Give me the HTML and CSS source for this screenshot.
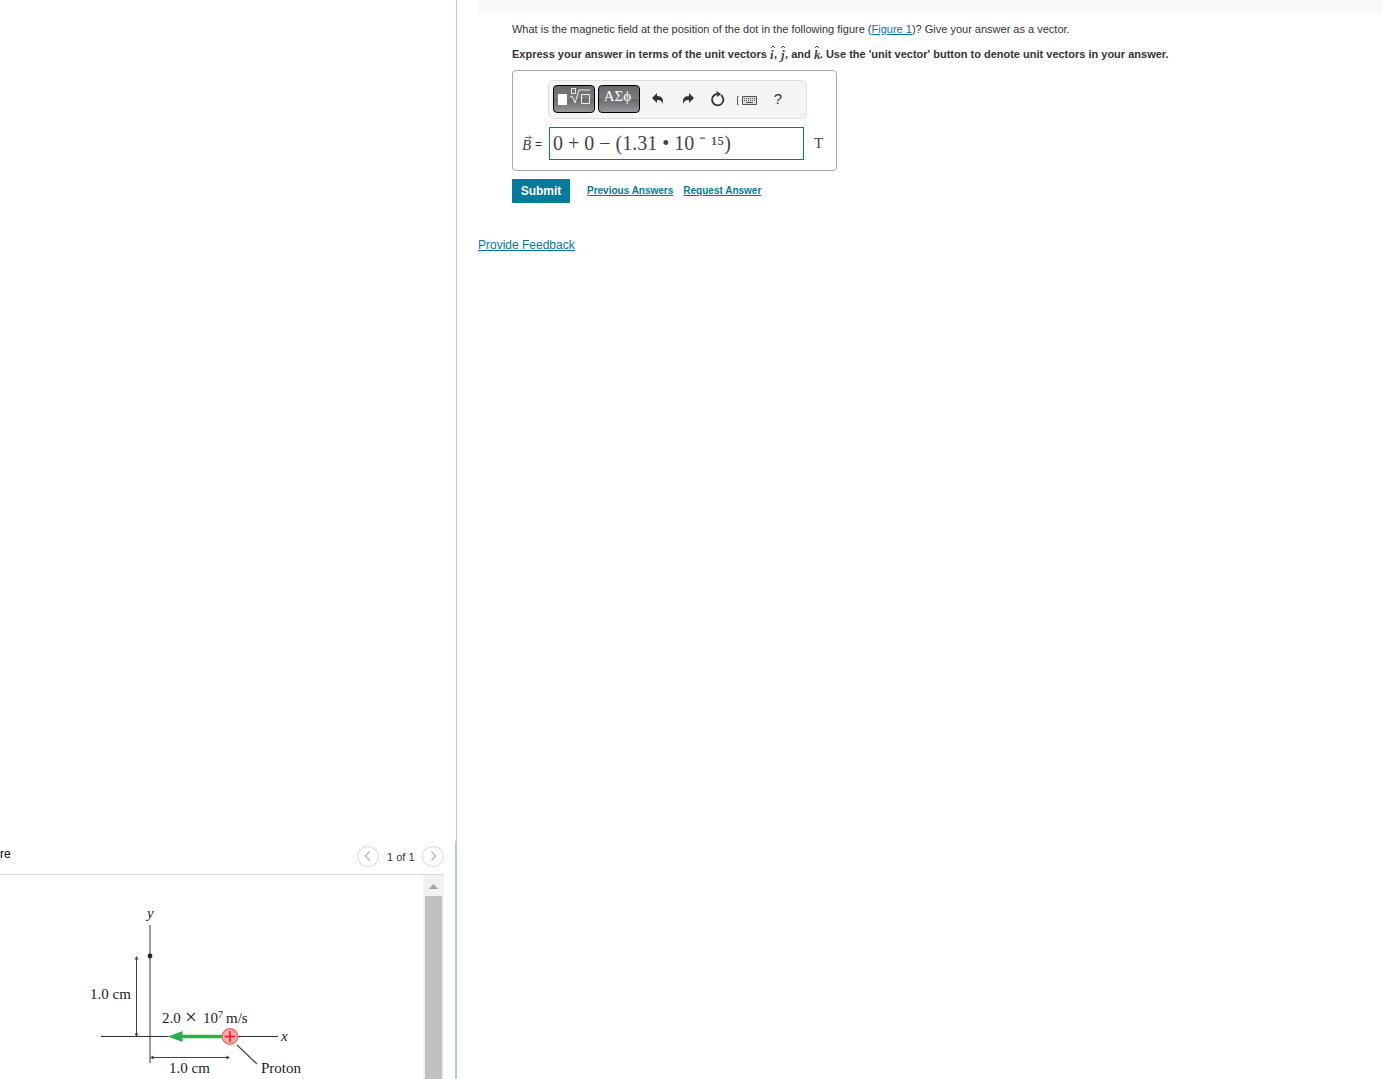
FILE: index.html
```html
<!DOCTYPE html>
<html lang="en">
<head>
<meta charset="utf-8">
<meta name="viewport" content="width=device-width, initial-scale=1">
<title>Magnetic field of a moving proton</title>
<link rel="stylesheet" href="styles.css">
</head>
<body>
<div class="layout">
  <aside class="side">
    <section class="figure-panel">
      <header class="figure-header">
        <h2 class="figure-title">re</h2>
        <nav class="pager" aria-label="Figures">
          <button class="pager-button" type="button" aria-label="Previous figure">
            <svg width="20" height="20" viewBox="0 0 20 20"><path d="M11.500 4.500 7.500 9l4 4.500" fill="none" stroke="#bbb" stroke-width="1.500"/></svg>
          </button>
          <span class="pager-text">1 of 1</span>
          <button class="pager-button" type="button" aria-label="Next figure">
            <svg width="20" height="20" viewBox="0 0 20 20"><path d="m8.500 4.500 4 4.500-4 4.500" fill="none" stroke="#bbb" stroke-width="1.500"/></svg>
          </button>
        </nav>
      </header>
      <div class="figure-body" id="figure">
        <svg class="diagram" width="330" height="204" viewBox="0 875 330 204" role="img" aria-label="Proton moving left along the x axis">
          <path d="M150 925v138" stroke="#777" stroke-width="1.500"/>
          <path d="M101 1036.500h177" stroke="#333" stroke-width="1.200"/>
          <path d="M136.500 958v77M151 1057.500h77" stroke="#444" stroke-width="1"/>
          <path d="m136.500 956-2 3.500h4zM136.500 1037l-2-3.500h4zM150 1057.500l3.500-2v4zM230 1057.500l-3.500-2v4z" fill="#444"/>
          <circle cx="150" cy="956" r="2.400" fill="#222"/>
          <path d="M180 1036.500h44" stroke="#25b34b" stroke-width="3.600"/>
          <path d="m168 1036.500 14.500-5.500v11z" fill="#25b34b"/>
          <circle cx="230" cy="1036.500" r="7.800" fill="#f9ab9c" stroke="#ef6a6c" stroke-width="1.200"/>
          <path d="M224.500 1036.500h11M230 1031v11" stroke="#e5173f" stroke-width="1.500"/>
          <path d="m237 1045 20 19" stroke="#444" stroke-width="1.200"/>
          <text x="147" y="918" class="axis">y</text>
          <text x="281" y="1041" class="axis">x</text>
          <text x="90" y="999">1.0 cm</text>
          <text x="162" y="1023">2.0 <tspan class="times" x="185" dy="1">×</tspan><tspan x="203" dy="-1">10</tspan><tspan class="exponent" dy="-5">7</tspan><tspan x="226" dy="5">m/s</tspan></text>
          <text x="169" y="1073">1.0 cm</text>
          <text x="261" y="1073">Proton</text>
        </svg>
        <div class="scrollbar" aria-hidden="true">
          <svg class="scroll-arrow" width="21" height="21" viewBox="0 0 21 21"><path d="M6 14l4.500-5 4.500 5z" fill="#a0a0a0"/></svg>
          <div class="scroll-thumb"></div>
        </div>
      </div>
    </section>
  </aside>
  <main class="main">
    <div class="part-bar"></div>
    <section class="question">
      <p class="prompt">What is the magnetic field at the position of the dot in the following figure (<a href="#figure">Figure 1</a>)? Give your answer as a vector.</p>
      <p class="instructions">Express your answer in terms of the unit vectors
        <svg class="unit" width="4" height="16" viewBox="0 0 4 16"><text x="0" y="13">i</text><path d="m1 2 2-2 2 2"/></svg>,
        <svg class="unit" width="5" height="16" viewBox="0 0 5 16"><text x="1" y="13">j</text><path d="m1 2 2-2 2 2"/></svg>, and
        <svg class="unit" width="6" height="16" viewBox="0 0 6 16"><text x="0" y="13">k</text><path d="m1 2 2-2 2 2"/></svg>. Use the 'unit vector' button to denote unit vectors in your answer.</p>
      <form class="answer">
        <div class="answer-box">
          <div class="toolbar">
            <button class="palette" type="button" aria-label="Templates">
              <svg width="40" height="26" viewBox="0 0 40 26"><path d="M4 8h9v11H4z" fill="#fff"/><path d="M17.500 2.500h4v5h-4zM16 11l2-1 3 7 4-13h11M27.500 8.500h8v9h-8z" fill="none" stroke="#eee"/></svg>
            </button>
            <button class="palette" type="button">ΑΣϕ</button>
            <button class="tool" type="button" aria-label="Undo"><svg width="14" height="14" viewBox="0 0 14 14"><path d="M6 1v3c5 0 7 3 5.500 8C11 9 9.500 8 6 8v3L1 6z" fill="#333"/></svg></button>
            <button class="tool" type="button" aria-label="Redo"><svg width="14" height="14" viewBox="0 0 14 14"><path d="M8 1v3C3 4 1 7 2.500 12 3 9 4.500 8 8 8v3l5-5z" fill="#333"/></svg></button>
            <button class="tool" type="button" aria-label="Reset"><svg width="16" height="16" viewBox="0 0 16 16"><path d="M11 4A5.700 5.700 0 1 1 7 3" fill="none" stroke="#333" stroke-width="1.800"/><path d="M6.500 0 11 3 7.500 6z" fill="#333"/></svg></button>
            <button class="tool" type="button" aria-label="Keyboard shortcuts"><svg width="24" height="14" viewBox="0 0 24 14"><path d="M2.500 4.500h-1v8h1" fill="none" stroke="#555"/><path d="M6.500 4.500h14v8h-14z" fill="#ddd" stroke="#555"/><path d="M8 6.500h12M8 8.500h12" stroke="#555" stroke-dasharray="1 1"/><path d="M10 10.500h7" stroke="#555"/></svg></button>
            <button class="tool help" type="button">?</button>
          </div>
          <label class="symbol" for="field">
            <svg width="11" height="18" viewBox="0 0 11 18" role="img"><text x="0" y="15">B</text><path d="M3 2.500h6M7 .5l2 2-2 2" fill="none" stroke="#444" stroke-width=".8"/></svg>
            <span>=</span>
          </label>
          <input class="field" id="field" type="text" value="0 + 0 − (1.31 • 10 ⁻ ¹⁵)">
          <span class="unit-label">T</span>
        </div>
        <div class="actions">
          <button class="submit" type="submit">Submit</button>
          <a href="#previous">Previous Answers</a>
          <a href="#request">Request Answer</a>
        </div>
      </form>
    </section>
    <a class="feedback" href="#feedback">Provide Feedback</a>
  </main>
</div>
</body>
</html>
```
FILE: styles.css
```css
* { box-sizing: border-box; }
body {
  margin: 0;
  background: #fff;
  color: #333;
  font: 11px/16px "Liberation Sans", Arial, sans-serif;
}
button { padding: 0; border: 0; background: none; font: inherit; color: inherit; }
svg { display: block; }
a { color: #047a9c; text-underline-offset: 1px; }
.layout { display: grid; grid-template-columns: 38fr 77fr; min-height: 100vh; }

.side {
  display: flex;
  flex-direction: column;
  justify-content: flex-end;
  border-right: 1px solid #b3cbe0;
}
.figure-panel { border-right: 1px solid #b3cbe0; padding-right: 11px; }
.figure-header {
  display: flex;
  justify-content: space-between;
  height: 34px;
  border-bottom: 1px solid #d9dbdb;
}
.figure-title { margin: 5px 0 0; font-size: 12px; font-weight: 400; color: #000; }
.pager { display: flex; gap: 8px; padding-top: 5px; align-items: flex-start; }
.pager-button { width: 22px; height: 21px; border: 1px solid #ddd; border-radius: 50%; }
.pager-text { padding-top: 3px; width: 27px; text-align: center; white-space: nowrap; }
.figure-body { display: flex; justify-content: space-between; }
.diagram text { font: 15px "Liberation Serif", serif; fill: #222; }
.diagram .axis { font-style: italic; }
.diagram .exponent { font-size: 10px; }
.diagram .times { font-size: 21px; }
.scrollbar { display: flex; flex-direction: column; width: 21px; background: #f1f1f1; }
.scroll-thumb { flex: 1; margin: 0 2px; background: #c1c1c1; }

.main { padding-left: 21px; }
.part-bar { height: 14px; background: #f8f8f8; }
.question { padding: 7px 0 0 34px; }
.prompt { margin: 0; }
.instructions { margin: 6px 0 0; height: 22px; line-height: 22px; font-weight: 700; }
.unit { display: inline-block; vertical-align: -4px; overflow: visible; }
.unit text { font: italic 700 13px "Liberation Serif", serif; fill: #444; }
.unit path { fill: none; stroke: #444; }

.answer-box {
  display: grid;
  grid-template-columns: 28px 255px 1fr;
  row-gap: 8px;
  width: 325px;
  margin-top: 5px;
  padding: 9px 8px 10px;
  border: 1px solid #aaa;
  border-radius: 4px;
}
.toolbar {
  grid-column: 2 / 4;
  display: flex;
  align-items: center;
  width: 259px;
  height: 39px;
  margin-left: -1px;
  padding: 0 4px 2px;
  border: 1px solid #ddd;
  border-radius: 6px;
  background: #f4f4f4;
}
.palette {
  width: 42px;
  height: 28px;
  margin-right: 3px;
  padding: 0 3px 6px 0;
  border: 1px solid #000;
  border-radius: 4px;
  background: linear-gradient(#6a6a6e 0, #7b7b80 50%, #68686c 50%, #96969c 100%);
  color: #fff;
  font: 15px/20px "Liberation Serif", serif;
}
.palette svg { margin-bottom: -6px; }
.tool { display: flex; justify-content: center; width: 30px; }
.help { font-size: 15px; }
.symbol { display: flex; align-items: center; justify-content: flex-end; gap: 2px; padding-right: 7px; font-size: 12px; }
.symbol text { font: italic 15px "Liberation Serif", serif; fill: #444; }
.field {
  width: 255px;
  height: 33px;
  padding: 0 3px 2px;
  border: 1px solid #047a9c;
  border-radius: 0;
  color: #444;
  font: 20px "Liberation Serif", serif;
}
.unit-label { align-self: center; padding-left: 10px; color: #444; font: 15px "Liberation Serif", serif; }
.actions { display: flex; align-items: center; gap: 10px; margin-top: 8px; font-size: 10px; font-weight: 700; }
.submit {
  width: 58px;
  height: 24px;
  margin-right: 7px;
  border-radius: 1px;
  background: #047a9c;
  color: #fff;
  font-size: 12px;
}
.feedback { display: inline-block; margin-top: 34px; font-size: 12px; }
```
